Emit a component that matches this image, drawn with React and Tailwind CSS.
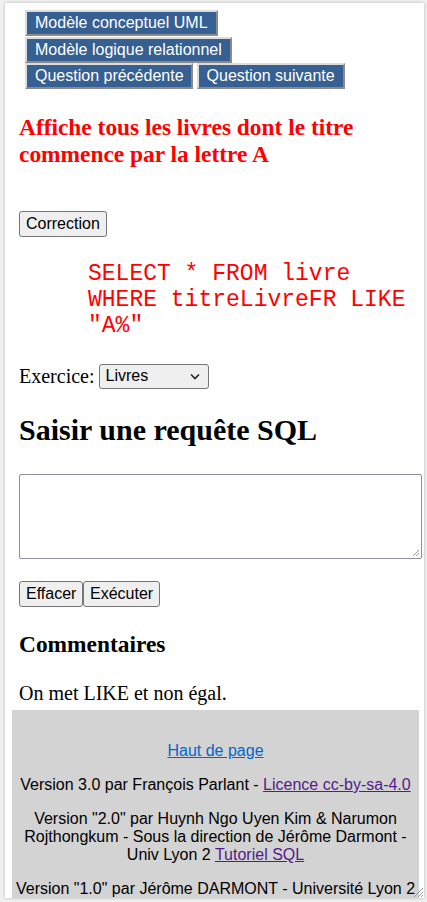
export default function App() {
  const navBtn =
    "h-[26px] flex items-center bg-[#366092] text-white text-[16px] leading-[18px] px-[8px] border-2 border-t-[#dcdcdc] border-l-[#dcdcdc] border-b-[#8a8a8a] border-r-[#8a8a8a] whitespace-nowrap";
  const sysBtn =
    "bg-[#efefef] border border-[#767676] rounded-[3px] px-[6px] h-[26px] text-[16px] leading-[18px] text-black";
  return (
    <div className="h-[902px] bg-[#f0f0f0] pt-[3px] pl-[5px] pr-[3px] overflow-hidden" style={{ fontFamily: '"Liberation Serif", serif' }}>
      <div className="relative bg-white h-[895px] w-[419px] shadow-[0_0_3px_rgba(0,0,0,0.25)] overflow-hidden">
        <div className="pl-[14px] pr-[2px]">
          <div className="pt-[7px] pl-[6px] flex flex-col items-start" style={{ fontFamily: '"Liberation Sans", sans-serif' }}>
            <div className="h-[27px] flex items-start">
              <span className={navBtn}>Modèle conceptuel UML</span>
            </div>
            <div className="h-[26px] flex items-start">
              <span className={navBtn}>Modèle logique relationnel</span>
            </div>
            <div className="h-[26px] flex items-start gap-[4px]">
              <span className={navBtn + " pr-[7px]"}>Question précédente</span>
              <span className={navBtn}>Question suivante</span>
            </div>
          </div>

          <h3 className="mt-[25px] text-[#ff0000] font-bold text-[23.4px] leading-[27px]">
            Affiche tous les livres dont le titre commence par la lettre A
          </h3>

          <div className="mt-[43px]">
            <button className={sysBtn} style={{ fontFamily: '"Liberation Sans", sans-serif' }}>Correction</button>
          </div>

          <div
            className="mt-[24px] ml-[69px] text-[#ff0000] text-[23px] leading-[26px]"
            style={{ fontFamily: '"Liberation Mono", monospace' }}
          >
            SELECT * FROM livre
            <br />
            WHERE titreLivreFR LIKE
            <br />
            "A%"
          </div>

          <div className="mt-[24px] flex items-center text-[20px] h-[26px]">
            <span>Exercice:</span>
            <div
              className="ml-[4px] w-[110px] h-[25px] bg-[#efefef] border border-[#767676] rounded-[3px] flex items-center justify-between px-[6px] text-[16px]"
              style={{ fontFamily: '"Liberation Sans", sans-serif' }}
            >
              <span>Livres</span>
              <svg width="10" height="7" viewBox="0 0 10 7" className="mr-[2px]">
                <path d="M1 1.5 L5 5.5 L9 1.5" fill="none" stroke="#222" strokeWidth="1.6" />
              </svg>
            </div>
          </div>

          <h2 className="mt-[25px] font-bold text-[30px] leading-[32px]">Saisir une requête SQL</h2>

          <div className="mt-[28px] relative w-[403px] h-[85px] border border-[#8f8f9d] rounded-[2px] bg-white">
            <svg className="absolute right-[1px] bottom-[1px]" width="8" height="8" viewBox="0 0 8 8">
              <path d="M7 1 L1 7 M7 4 L4 7" stroke="#999" strokeWidth="1" />
            </svg>
          </div>

          <div className="mt-[22px] flex" style={{ fontFamily: '"Liberation Sans", sans-serif' }}>
            <button className={sysBtn + " w-[64px]"}>Effacer</button>
            <button className={sysBtn + " w-[77px]"}>Exécuter</button>
          </div>

          <h3 className="mt-[24px] font-bold text-[23.4px] leading-[26px]">Commentaires</h3>

          <p className="mt-[25px] text-[20px] leading-[22px]">On met LIKE et non égal.</p>
        </div>

        <div
          className="mt-[6px] ml-[7px] w-[407px] h-[200px] bg-[#d3d3d3] text-center text-[16px] leading-[18px] text-black"
          style={{ fontFamily: '"Liberation Sans", sans-serif' }}
        >
          <div className="pt-[32px]">
            <a className="text-[#0066cc] underline">Haut de page</a>
          </div>
          <p className="mt-[16px]">
            Version 3.0 par François Parlant - <a className="text-[#551a8b] underline">Licence cc-by-sa-4.0</a>
          </p>
          <p className="mt-[16px] px-[8px]">
            Version "2.0" par Huynh Ngo Uyen Kim &amp; Narumon Rojthongkum - Sous la direction de Jérôme Darmont - Univ Lyon 2{" "}
            <a className="text-[#551a8b] underline">Tutoriel SQL</a>
          </p>
          <p className="mt-[16px] whitespace-nowrap">Version "1.0" par Jérôme DARMONT - Université Lyon 2</p>
        </div>

        <svg className="absolute right-0 bottom-0" width="12" height="12" viewBox="0 0 12 12">
          <path d="M11 2 L2 11 M11 6 L6 11 M11 9 L9 11" stroke="#9a9a9a" strokeWidth="1" />
        </svg>
      </div>
    </div>
  );
}
